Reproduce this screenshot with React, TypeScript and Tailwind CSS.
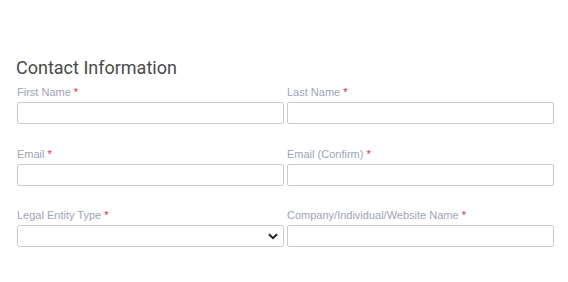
import React from 'react';

const Label: React.FC<{ text: string }> = ({ text }) => (
  <label className="block text-[11px] leading-[16px] text-[#9ea4b8] mb-[2px]">
    {text} <span className="text-[#ec1a3c]">*</span>
  </label>
);

const Field: React.FC<{ label: string; select?: boolean }> = ({ label, select }) => (
  <div className="w-[267px]">
    <Label text={label} />
    {select ? (
      <div className="relative h-[22px] border border-[#cccccc] rounded-[2px] bg-white">
        <svg
          className="absolute right-[5px] top-[7px]"
          width="10"
          height="7"
          viewBox="0 0 10 7"
          fill="none"
        >
          <path d="M1 1.2 L5 5.2 L9 1.2" stroke="#222" strokeWidth="2" />
        </svg>
      </div>
    ) : (
      <input
        type="text"
        className="block w-full h-[22px] border border-[#cccccc] rounded-[2px] bg-white outline-none"
      />
    )}
  </div>
);

export default function App() {
  return (
    <div className="w-[568px] h-[282px] bg-white pt-[57px] pl-[17px] font-['Liberation_Sans',Arial,sans-serif]">
      <h2 className="font-['Roboto',sans-serif] text-[18px] leading-[22px] text-[#4a4a4a] -ml-[1px] mb-[5px]">
        Contact Information
      </h2>
      <div className="flex flex-col">
        <div className="flex gap-[3px]">
          <Field label="First Name" />
          <Field label="Last Name" />
        </div>
        <div className="flex gap-[3px] mt-[22px]">
          <Field label="Email" />
          <Field label="Email (Confirm)" />
        </div>
        <div className="flex gap-[3px] mt-[21px]">
          <Field label="Legal Entity Type" select />
          <Field label="Company/Individual/Website Name" />
        </div>
      </div>
    </div>
  );
}
